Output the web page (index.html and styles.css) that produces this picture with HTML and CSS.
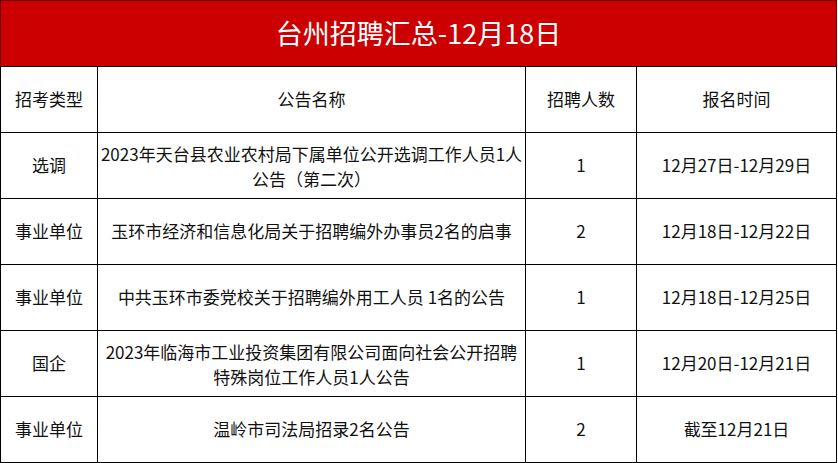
FILE: index.html
```html
<!DOCTYPE html>
<html lang="zh-CN">
<head>
<meta charset="utf-8">
<title>台州招聘汇总</title>
<link rel="stylesheet" href="styles.css">
</head>
<body>
<div class="sheet">
  <div class="title">台州招聘汇总-12月18日</div>
  <div class="grid">
    <div class="cell">招考类型</div>
    <div class="cell">公告名称</div>
    <div class="cell">招聘人数</div>
    <div class="cell">报名时间</div>

    <div class="cell">选调</div>
    <div class="cell two"><span class="line">2023年天台县农业农村局下属单位公开选调工作人员1人</span><span class="line">公告（第二次）</span></div>
    <div class="cell">1</div>
    <div class="cell">12月27日-12月29日</div>

    <div class="cell">事业单位</div>
    <div class="cell">玉环市经济和信息化局关于招聘编外办事员2名的启事</div>
    <div class="cell">2</div>
    <div class="cell">12月18日-12月22日</div>

    <div class="cell">事业单位</div>
    <div class="cell">中共玉环市委党校关于招聘编外用工人员 1名的公告</div>
    <div class="cell">1</div>
    <div class="cell">12月18日-12月25日</div>

    <div class="cell">国企</div>
    <div class="cell two"><span class="line">2023年临海市工业投资集团有限公司面向社会公开招聘</span><span class="line">特殊岗位工作人员1人公告</span></div>
    <div class="cell">1</div>
    <div class="cell">12月20日-12月21日</div>

    <div class="cell">事业单位</div>
    <div class="cell">温岭市司法局招录2名公告</div>
    <div class="cell">2</div>
    <div class="cell">截至12月21日</div>
  </div>
</div>
</body>
</html>
```

FILE: styles.css
```css
html, body {
  margin: 0;
  padding: 0;
  background: #ffffff;
}

.sheet {
  width: 837px;
  font-family: "Noto Sans CJK SC", "Noto Sans", sans-serif;
  color: #111;
}

.title {
  box-sizing: border-box;
  height: 67px;
  background: #cc0000;
  border-top: 1px solid #6a0000;
  border-left: 1px solid #6a0000;
  border-right: 1px solid #6a0000;
  border-bottom: 1px solid #000;
  color: #ffffff;
  font-size: 27px;
  display: flex;
  align-items: center;
  justify-content: center;
  padding-bottom: 3px;
}

.grid {
  display: grid;
  grid-template-columns: 97px 428px 111px 200px;
  grid-auto-rows: 66px;
  border-left: 1px solid #000;
}

.cell {
  box-sizing: border-box;
  border-right: 1px solid #000;
  border-bottom: 1px solid #000;
  display: flex;
  align-items: center;
  justify-content: center;
  text-align: center;
  font-size: 17px;
  line-height: 22px;
  white-space: nowrap;
  padding-bottom: 1px;
}

.two {
  flex-direction: column;
  gap: 5px;
  padding-top: 2px;
}

.line {
  display: block;
  line-height: 20px;
}
```
